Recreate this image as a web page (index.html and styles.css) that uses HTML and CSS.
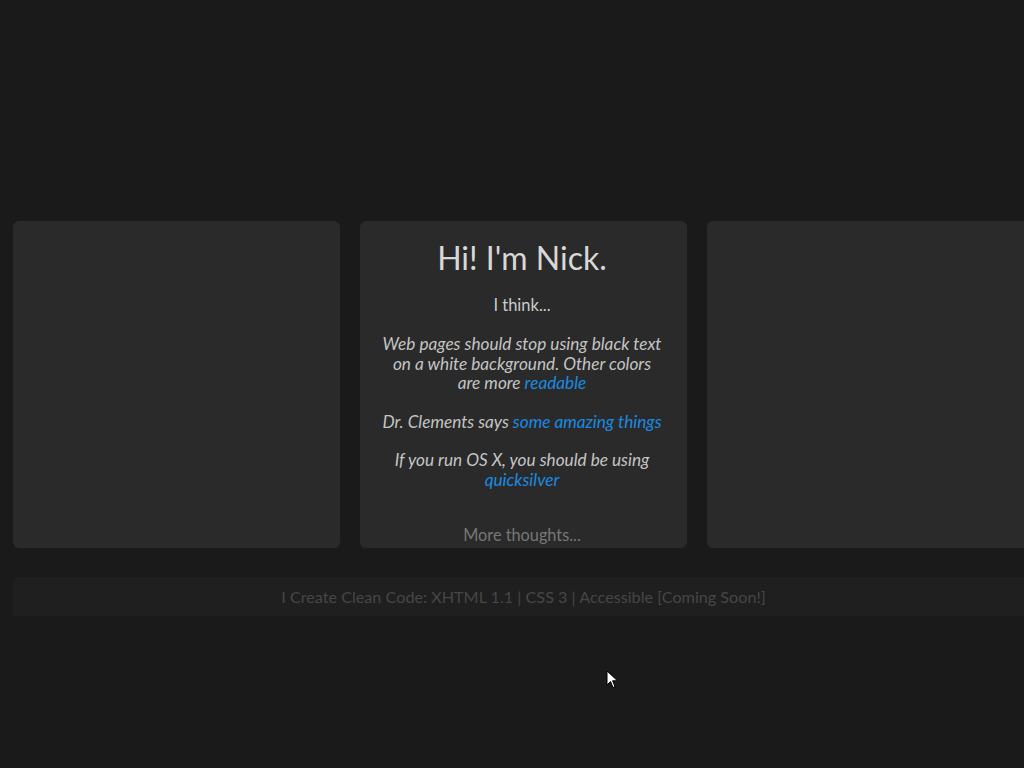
FILE: index.html
```html
<!DOCTYPE html>
<html>
<head>
<meta charset="utf-8">
<title>Hi! I'm Nick.</title>
<link rel="stylesheet" href="styles.css">
</head>
<body>
<div class="page">
  <div class="panels">
    <div class="panel"></div>
    <div class="panel main">
      <h1 class="title">Hi! I'm Nick.</h1>
      <p class="lead">I think...</p>
      <p class="thought">Web pages should stop using black text on a white background. Other colors are more <a href="#">readable</a></p>
      <p class="thought">Dr. Clements says <a href="#">some amazing things</a></p>
      <p class="thought">If you run OS X, you should be using <a href="#">quicksilver</a></p>
      <p class="more">More thoughts...</p>
    </div>
    <div class="panel"></div>
  </div>
  <div class="footer">I Create Clean Code: XHTML 1.1 | CSS 3 | Accessible [Coming Soon!]</div>
</div>
<svg class="cursor" width="14" height="20" viewBox="0 0 14 20"><path d="M1 1 L1 15 L4.5 11.5 L7 17.5 L9 16.6 L6.6 10.8 L11.5 10.8 Z" fill="#fff" stroke="#000" stroke-width="1"/></svg>
</body>
</html>
```
FILE: styles.css
```css
html, body {
  margin: 0;
  padding: 0;
  background: #1a1a1a;
  overflow: hidden;
  height: 100%;
}
body {
  font-family: Lato, "Open Sans", sans-serif;
  color: #cccccc;
  position: relative;
}
.page {
  padding: 221px 0 0 13px;
  display: flex;
  flex-direction: column;
  gap: 29px;
}
.panels {
  display: flex;
  gap: 20px;
}
.panel {
  flex: 0 0 327px;
  height: 327px;
  background: #2a2a2a;
  border-radius: 6px;
  box-sizing: border-box;
}
.main {
  display: flex;
  flex-direction: column;
  align-items: center;
  text-align: center;
  padding: 18px 24px 3px 21px;
}
.title {
  margin: 0;
  font-size: 32px;
  font-weight: normal;
  line-height: 38px;
  color: #d8d8d8;
}
.lead {
  margin: 18px 0 0;
  font-size: 16.5px;
  line-height: 20px;
}
.thought {
  margin: 19px 0 0;
  font-size: 17.2px;
  line-height: 19.5px;
  font-style: italic;
  color: #c4c4c4;
}
.thought a {
  color: #1a8ae0;
  text-decoration: none;
}
.more {
  margin: auto 0 0;
  font-size: 16.3px;
  line-height: 20px;
  color: #777777;
}
.footer {
  height: 39px;
  line-height: 40px;
  background: #1f1f1f;
  border-radius: 4px 0 0 4px;
  color: #464646;
  font-size: 16.2px;
  text-align: center;
  flex: none;
  width: 1021px;
  box-sizing: border-box;
}
.cursor {
  position: absolute;
  left: 606px;
  top: 670px;
}
```
